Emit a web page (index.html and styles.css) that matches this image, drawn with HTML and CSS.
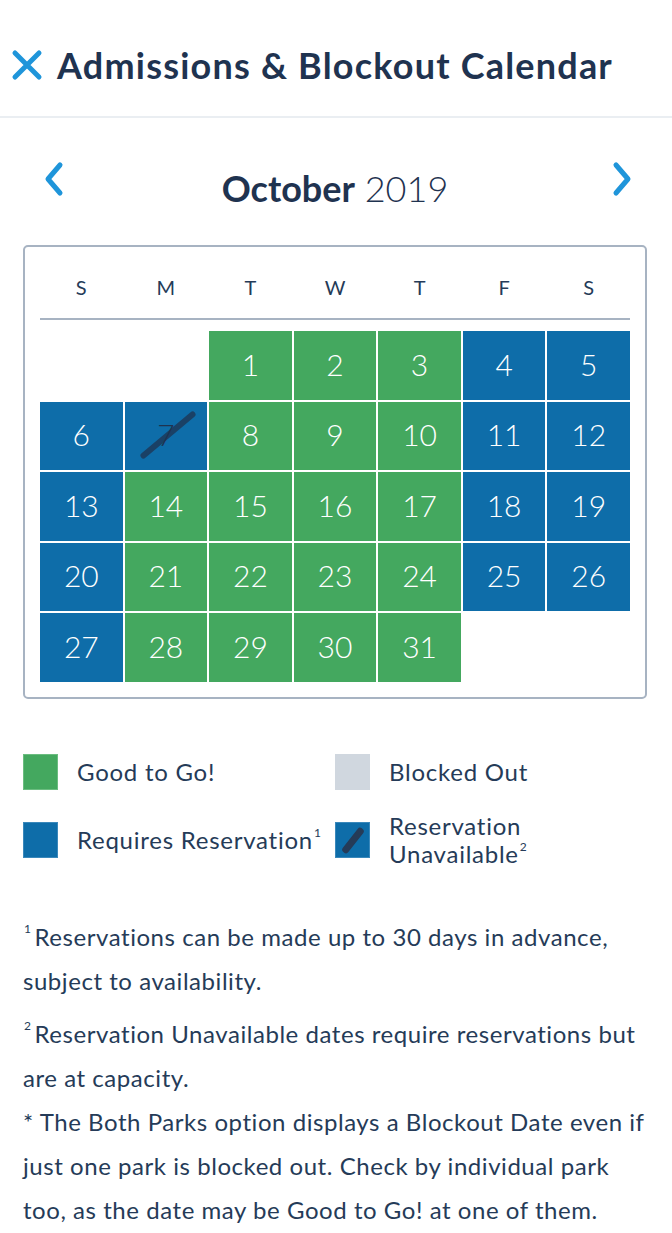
FILE: index.html
```html
<!DOCTYPE html>
<html lang="en">
<head>
<meta charset="utf-8">
<title>Admissions &amp; Blockout Calendar</title>
<link rel="stylesheet" href="styles.css">
</head>
<body>
<header class="topbar">
  <svg class="close-icon" width="32" height="32" viewBox="0 0 32 32" aria-hidden="true">
    <path d="M4 4 L28 28 M28 4 L4 28" stroke="#1f95da" stroke-width="5" stroke-linecap="round" fill="none"/>
  </svg>
  <h1 class="title">Admissions &amp; Blockout Calendar</h1>
</header>

<section class="month-nav">
  <svg class="chev" width="24" height="36" viewBox="0 0 24 36" aria-hidden="true">
    <path d="M18 4 L6 18 L18 32" stroke="#1f95da" stroke-width="5" stroke-linecap="round" stroke-linejoin="round" fill="none"/>
  </svg>
  <div class="month"><b>October</b> 2019</div>
  <svg class="chev" width="24" height="36" viewBox="0 0 24 36" aria-hidden="true">
    <path d="M6 4 L18 18 L6 32" stroke="#1f95da" stroke-width="5" stroke-linecap="round" stroke-linejoin="round" fill="none"/>
  </svg>
</section>

<section class="calendar">
  <div class="dow">
    <span>S</span><span>M</span><span>T</span><span>W</span><span>T</span><span>F</span><span>S</span>
  </div>
  <div class="days">
    <span class="empty"></span><span class="empty"></span>
    <span class="g">1</span><span class="g">2</span><span class="g">3</span><span class="b">4</span><span class="b">5</span>
    <span class="b">6</span><span class="b u">7<i class="slash"></i></span><span class="g">8</span><span class="g">9</span><span class="g">10</span><span class="b">11</span><span class="b">12</span>
    <span class="b">13</span><span class="g">14</span><span class="g">15</span><span class="g">16</span><span class="g">17</span><span class="b">18</span><span class="b">19</span>
    <span class="b">20</span><span class="g">21</span><span class="g">22</span><span class="g">23</span><span class="g">24</span><span class="b">25</span><span class="b">26</span>
    <span class="b">27</span><span class="g">28</span><span class="g">29</span><span class="g">30</span><span class="g">31</span>
  </div>
</section>

<section class="legend">
  <div class="item"><span class="sw sw-g"></span><span class="lbl">Good to Go!</span></div>
  <div class="item"><span class="sw sw-x"></span><span class="lbl">Blocked Out</span></div>
  <div class="item"><span class="sw sw-b"></span><span class="lbl">Requires Reservation<sup>1</sup></span></div>
  <div class="item"><span class="sw sw-b sw-u"><i class="mini-slash"></i></span><span class="lbl two">Reservation<br>Unavailable<sup>2</sup></span></div>
</section>

<section class="notes">
  <p class="n1"><sup>1</sup>Reservations can be made up to 30 days in advance, subject to availability.</p>
  <p><sup>2</sup>Reservation Unavailable dates require reservations but are at capacity.</p>
  <p>* The Both Parks option displays a Blockout Date even if just one park is blocked out. Check by individual park too, as the date may be Good to Go! at one of them.</p>
</section>
</body>
</html>
```

FILE: styles.css
```css
* { box-sizing: border-box; }
html, body { margin: 0; padding: 0; background: #fff; }
body {
  width: 672px;
  font-family: "Lato", "Noto Sans", sans-serif;
  color: #253b58;
}

.topbar {
  height: 118px;
  border-bottom: 2px solid #eaeef2;
  display: flex;
  align-items: center;
  padding: 14px 0 0 11px;
  gap: 14px;
}
.close-icon { flex: none; }
.title {
  margin: 0;
  font-size: 36px;
  font-weight: 700;
  color: #1f3350;
  letter-spacing: 1.2px;
  white-space: nowrap;
}

.month-nav {
  height: 127px;
  display: flex;
  align-items: center;
  justify-content: space-between;
  padding: 12px 38px 0 42px;
}
.month-nav .chev { margin-top: -18px; }
.month {
  font-size: 36px;
  color: #1f3350;
  font-weight: 300;
  margin-left: -6px;
}
.month b { font-weight: 700; }

.calendar {
  margin: 0 25px 0 23px;
  border: 2px solid #a7b3c2;
  border-radius: 5px;
  padding: 0 15px 15px;
}
.dow {
  display: grid;
  grid-template-columns: repeat(7, 1fr);
  gap: 2px;
  text-align: center;
  font-size: 20px;
  line-height: 26px;
  padding: 27px 0 18px;
  border-bottom: 2px solid #a7b3c2;
  color: #253b58;
}
.days {
  margin-top: 11px;
  display: grid;
  grid-template-columns: repeat(7, 1fr);
  grid-auto-rows: 68.5px;
  gap: 2px;
}
.days span {
  display: flex;
  align-items: center;
  justify-content: center;
  font-size: 30px;
  font-weight: 300;
  color: #fff;
  position: relative;
  padding-bottom: 3px;
}
.days .g { background: #44a85f; }
.days .b { background: #0e6da9; }
.days .u { color: #1f3350; }
.slash {
  position: absolute;
  left: 8px;
  top: 30px;
  width: 70px;
  height: 6px;
  border-radius: 3px;
  background: rgba(31, 51, 80, 0.75);
  transform: rotate(-40deg);
}

.legend {
  margin: 55px 0 0 23px;
  display: grid;
  grid-template-columns: 312px 1fr;
  row-gap: 32px;
}
.item {
  display: flex;
  align-items: center;
  gap: 19px;
  height: 36px;
}
.sw {
  flex: none;
  width: 35px;
  height: 36px;
  position: relative;
}
.sw-g { background: #44a85f; border: 1px solid #6bbd80; }
.sw-x { background: #d0d7df; }
.sw-b { background: #0e6da9; border: 1px solid #3a88bb; }
.mini-slash {
  position: absolute;
  left: 2px;
  top: 14px;
  width: 30px;
  height: 7px;
  border-radius: 3px;
  background: #253b58;
  transform: rotate(-52deg);
}
.lbl {
  font-size: 24px;
  line-height: 28px;
  letter-spacing: 0.75px;
  color: #253b58;
  white-space: nowrap;
}
.lbl sup { font-size: 12px; vertical-align: 12px; line-height: 0; margin-left: 1px; }

.notes {
  margin: 57px 20px 0 23px;
  font-size: 24px;
  line-height: 44px;
  letter-spacing: 0.55px;
  color: #253b58;
}
.notes p { margin: 0; }
.notes .n1 { margin-bottom: 9px; }
.notes sup {
  font-size: 12px;
  vertical-align: 13px;
  line-height: 12px;
  margin-left: 1px;
  margin-right: 3px;
}
```
